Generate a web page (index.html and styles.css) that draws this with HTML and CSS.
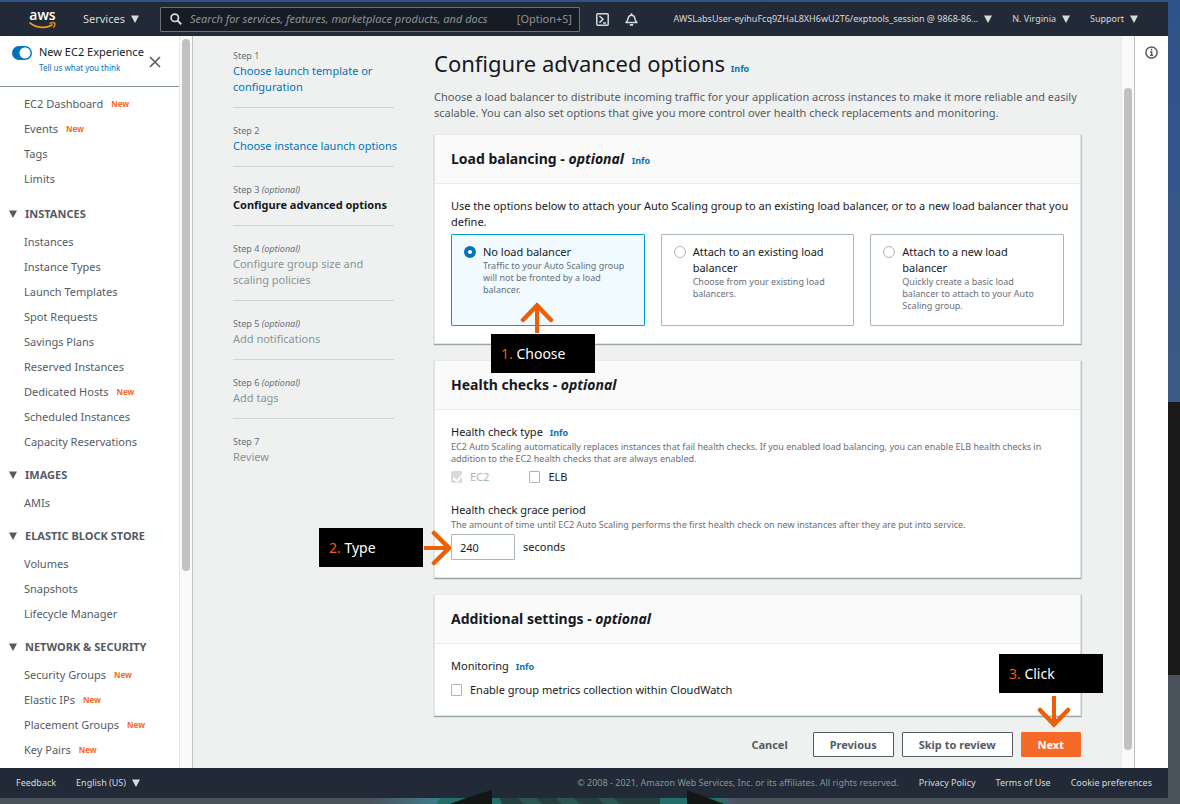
FILE: index.html
```html
<!DOCTYPE html>
<html lang="en">
<head>
<meta charset="utf-8">
<title>Configure advanced options</title>
<link rel="stylesheet" href="styles.css">
</head>
<body>
<svg class="defs" width="0" height="0" aria-hidden="true">
  <symbol id="caret" viewBox="0 0 8 8"><path d="M0 0.5H8L4 8Z" fill="currentColor"/></symbol>
</svg>
<div class="window">
  <header class="topbar">
    <a class="logo" href="#" aria-label="Home">
      <span>aws</span>
      <svg viewBox="0 0 27 7" aria-hidden="true"><path d="M1 1C8 6.5 17 6.5 23 3" fill="none" stroke="#f7981f" stroke-width="1.6" stroke-linecap="round"/><path d="M20.500 1.300C23 .6 25 .6 25.800 1.200C26.200 2.400 25.500 4.300 24.300 5.600" fill="none" stroke="#f7981f" stroke-width="1.300"/></svg>
    </a>
    <button class="services">Services <svg class="caret"><use href="#caret"/></svg></button>
    <label class="search">
      <svg viewBox="0 0 12 12" aria-hidden="true"><circle cx="4.800" cy="4.800" r="3.700" fill="none" stroke="currentColor" stroke-width="1.700"/><path d="M7.600 7.600L11.200 11.200" stroke="currentColor" stroke-width="2"/></svg>
      <input type="text" aria-label="Search" placeholder="Search for services, features, marketplace products, and docs">
      <span>[Option+S]</span>
    </label>
    <button class="icon-btn" aria-label="CloudShell"><svg width="13" height="13" viewBox="0 0 13 13"><rect x=".8" y=".8" width="11.400" height="11.400" rx="1" fill="none" stroke="currentColor" stroke-width="1.500"/><path d="M3.500 3L7 6.300L3.500 9.600M7 10H10" fill="none" stroke="currentColor" stroke-width="1.500"/></svg></button>
    <button class="icon-btn bell" aria-label="Notifications"><svg width="13" height="13" viewBox="0 0 13 13"><path d="M1 9.500C3 7.800 2.800 6.500 3.300 4.800C3.800 3 5 2.300 6.500 2.300S9.200 3 9.700 4.800C10.200 6.500 10 7.800 12 9.500Z" fill="none" stroke="currentColor" stroke-width="1.500" stroke-linejoin="round"/><path d="M6.500 .2V2.500M4.800 11.800H8.200" stroke="currentColor" stroke-width="1.700"/></svg></button>
    <nav class="account">
      <button>AWSLabsUser-eyihuFcq9ZHaL8XH6wU2T6/exptools_session @ 9868-86... <svg class="caret"><use href="#caret"/></svg></button>
      <button>N. Virginia <svg class="caret"><use href="#caret"/></svg></button>
      <button>Support <svg class="caret"><use href="#caret"/></svg></button>
    </nav>
  </header>

  <div class="workspace">
    <aside class="sidebar">
      <div class="experience">
        <input class="toggle" type="checkbox" id="new-exp" checked>
        <div class="experience-text">
          <label for="new-exp">New EC2 Experience</label>
          <a href="#">Tell us what you think</a>
        </div>
        <button class="close" aria-label="Close"><svg width="12" height="12" viewBox="0 0 12 12"><path d="M1 1L11 11M11 1L1 11" stroke="currentColor" stroke-width="1.600"/></svg></button>
      </div>
      <nav class="menu">
        <ul>
          <li><a href="#">EC2 Dashboard</a><em>New</em></li>
          <li><a href="#">Events</a><em>New</em></li>
          <li><a href="#">Tags</a></li>
          <li><a href="#">Limits</a></li>
        </ul>
        <button class="group"><svg class="caret"><use href="#caret"/></svg>INSTANCES</button>
        <ul>
          <li><a href="#">Instances</a></li>
          <li><a href="#">Instance Types</a></li>
          <li><a href="#">Launch Templates</a></li>
          <li><a href="#">Spot Requests</a></li>
          <li><a href="#">Savings Plans</a></li>
          <li><a href="#">Reserved Instances</a></li>
          <li><a href="#">Dedicated Hosts</a><em>New</em></li>
          <li><a href="#">Scheduled Instances</a></li>
          <li><a href="#">Capacity Reservations</a></li>
        </ul>
        <button class="group"><svg class="caret"><use href="#caret"/></svg>IMAGES</button>
        <ul>
          <li><a href="#">AMIs</a></li>
        </ul>
        <button class="group"><svg class="caret"><use href="#caret"/></svg>ELASTIC BLOCK STORE</button>
        <ul>
          <li><a href="#">Volumes</a></li>
          <li><a href="#">Snapshots</a></li>
          <li><a href="#">Lifecycle Manager</a></li>
        </ul>
        <button class="group"><svg class="caret"><use href="#caret"/></svg>NETWORK &amp; SECURITY</button>
        <ul>
          <li><a href="#">Security Groups</a><em>New</em></li>
          <li><a href="#">Elastic IPs</a><em>New</em></li>
          <li><a href="#">Placement Groups</a><em>New</em></li>
          <li><a href="#">Key Pairs</a><em>New</em></li>
        </ul>
      </nav>
    </aside>
    <div class="track track-left"><div class="thumb"></div></div>

    <div class="content">
      <ol class="steps">
        <li><small>Step 1</small><a href="#">Choose launch template or configuration</a></li>
        <li><small>Step 2</small><a href="#">Choose instance launch options</a></li>
        <li class="current"><small>Step 3 <i>(optional)</i></small><span>Configure advanced options</span></li>
        <li><small>Step 4 <i>(optional)</i></small><span>Configure group size and scaling policies</span></li>
        <li><small>Step 5 <i>(optional)</i></small><span>Add notifications</span></li>
        <li><small>Step 6 <i>(optional)</i></small><span>Add tags</span></li>
        <li><small>Step 7</small><span>Review</span></li>
      </ol>

      <main class="main">
        <h1>Configure advanced options <a class="info" href="#">Info</a></h1>
        <p class="intro">Choose a load balancer to distribute incoming traffic for your application across instances to make it more reliable and easily scalable. You can also set options that give you more control over health check replacements and monitoring.</p>

        <section class="panel">
          <h2>Load balancing - <i>optional</i> <a class="info" href="#">Info</a></h2>
          <div class="panel-body">
            <p class="lead">Use the options below to attach your Auto Scaling group to an existing load balancer, or to a new load balancer that you define.</p>
            <div class="tiles">
              <div class="tile selected">
                <input type="radio" name="lb" id="lb-none" checked>
                <div><label for="lb-none">No load balancer</label><p>Traffic to your Auto Scaling group will not be fronted by a load balancer.</p></div>
                <div class="note note-choose">
                  <svg width="34" height="32" viewBox="0 0 34 32" aria-hidden="true"><path d="M17 31V4" stroke="#eb5f07" stroke-width="4"/><path d="M3 18L17 3.500L31 18" fill="none" stroke="#eb5f07" stroke-width="4.500" stroke-linecap="round"/></svg>
                  <div class="callout"><b>1.</b> Choose</div>
                </div>
              </div>
              <div class="tile">
                <input type="radio" name="lb" id="lb-existing">
                <div><label for="lb-existing">Attach to an existing load balancer</label><p>Choose from your existing load balancers.</p></div>
              </div>
              <div class="tile">
                <input type="radio" name="lb" id="lb-new">
                <div><label for="lb-new">Attach to a new load balancer</label><p>Quickly create a basic load balancer to attach to your Auto Scaling group.</p></div>
              </div>
            </div>
          </div>
        </section>

        <section class="panel">
          <h2>Health checks - <i>optional</i></h2>
          <div class="panel-body">
            <h3>Health check type <a class="info" href="#">Info</a></h3>
            <p class="help">EC2 Auto Scaling automatically replaces instances that fail health checks. If you enabled load balancing, you can enable ELB health checks in addition to the EC2 health checks that are always enabled.</p>
            <div class="checks">
              <span class="check disabled"><input type="checkbox" id="hc-ec2" checked disabled><label for="hc-ec2">EC2</label></span>
              <span class="check"><input type="checkbox" id="hc-elb"><label for="hc-elb">ELB</label></span>
            </div>
            <label class="field-label" for="grace">Health check grace period</label>
            <p class="help">The amount of time until EC2 Auto Scaling performs the first health check on new instances after they are put into service.</p>
            <div class="grace">
              <input type="text" id="grace" value="240"><span>seconds</span>
              <div class="note note-type">
                <div class="callout"><b>2.</b> Type</div>
                <svg width="28" height="36" viewBox="0 0 28 36" aria-hidden="true"><path d="M1 18H25" stroke="#eb5f07" stroke-width="4"/><path d="M11 3L26 18L11 33" fill="none" stroke="#eb5f07" stroke-width="4.500" stroke-linecap="round"/></svg>
              </div>
            </div>
          </div>
        </section>

        <section class="panel">
          <h2>Additional settings - <i>optional</i></h2>
          <div class="panel-body extra-body">
            <h3>Monitoring <a class="info" href="#">Info</a></h3>
            <span class="check"><input type="checkbox" id="metrics"><label for="metrics">Enable group metrics collection within CloudWatch</label></span>
          </div>
        </section>

        <div class="actions">
          <button class="btn link">Cancel</button>
          <button class="btn">Previous</button>
          <button class="btn">Skip to review</button>
          <button class="btn primary">Next</button>
          <div class="note note-click">
            <div class="callout"><b>3.</b> Click</div>
            <svg width="34" height="32" viewBox="0 0 34 32" aria-hidden="true"><path d="M17 0V28" stroke="#eb5f07" stroke-width="4"/><path d="M3 14L17 28.500L31 14" fill="none" stroke="#eb5f07" stroke-width="4.500" stroke-linecap="round"/></svg>
          </div>
        </div>
      </main>
    </div>
    <div class="track track-right"><div class="thumb"></div></div>
    <aside class="help-rail">
      <button aria-label="Help panel"><svg width="13" height="13" viewBox="0 0 13 13"><circle cx="6.500" cy="6.500" r="5.600" fill="none" stroke="currentColor" stroke-width="1.500"/><path d="M6.500 2.800V4.500M5 5.900H6.700V9.300M4.900 9.400H8.200" fill="none" stroke="currentColor" stroke-width="1.400"/></svg></button>
    </aside>
  </div>

  <footer class="footer">
    <button>Feedback</button>
    <button class="lang">English (US) <svg class="caret"><use href="#caret"/></svg></button>
    <span class="copyright">© 2008 - 2021, Amazon Web Services, Inc. or its affiliates. All rights reserved.</span>
    <a href="#">Privacy Policy</a>
    <a href="#">Terms of Use</a>
    <a href="#">Cookie preferences</a>
  </footer>
</div>
<svg class="wallpaper" width="370" height="14" viewBox="0 0 370 14" aria-hidden="true">
  <defs><linearGradient id="haze"><stop offset="0" stop-color="#4a525c"/><stop offset=".2" stop-color="#3f7f90"/><stop offset=".9" stop-color="#4b6f88"/><stop offset="1" stop-color="#4a525c"/></linearGradient></defs>
  <rect y="8" width="370" height="6" fill="url(#haze)"/>
  <path d="M66 14L70 8H350L358 14Z" fill="#246e6a"/>
  <path d="M130 8H290V14H132Z" fill="#253f3e"/>
  <path d="M148 8H166L172 14H154ZM186 8H204L210 14H192ZM228 8H244L250 14H234Z" fill="#2b5552"/>
  <path d="M80 14Q98 7 122 0V14ZM317 0L354 14H317Z" fill="#141615"/>
</svg>
</body>
</html>
```
FILE: styles.css
```css
* { box-sizing: border-box; }

body {
  margin: 0;
  height: 100vh;
  display: flex;
  flex-direction: column;
  padding: 2px 12px 6px 0;
  overflow: hidden;
  position: relative;
  background: linear-gradient(#2f5288, #3b5a86 50%, #191919 50%, #191919 84%, #4a525c 84%);
  font: 11px/16px "Noto Sans", "Open Sans", sans-serif;
  color: #16191f;
}

.defs { position: absolute; }
button, input { font: inherit; color: inherit; }
button { border: 0; background: none; padding: 0; cursor: pointer; }
a { color: #0073bb; text-decoration: none; }
p, h1, h2, h3, ul, ol { margin: 0; padding: 0; }
ul, ol { list-style: none; }
.caret { width: 8px; height: 8px; }

.window { flex: 1; min-height: 0; display: flex; flex-direction: column; }

/* top bar */
.topbar {
  flex: none;
  height: 34px;
  display: flex;
  align-items: center;
  background: #212a36;
  color: #d5dbdb;
  padding: 0 30px 0 29px;
}
.logo { display: flex; flex-direction: column; align-items: center; color: #fff; width: 27px; }
.logo span { font: 600 14px/12px "Open Sans", sans-serif; }
.logo svg { width: 27px; height: 7px; margin-top: 1px; }
.services { margin-left: 27px; display: flex; align-items: center; gap: 6px; }
.search {
  flex: 0 1 420px;
  min-width: 0;
  height: 25px;
  margin-left: 21px;
  display: flex;
  align-items: center;
  gap: 8px;
  padding: 0 7px 0 9px;
  border: 1px solid #687078;
  border-radius: 1px;
  background: #171c24;
  color: #879596;
}
.search svg { flex: none; width: 12px; height: 12px; color: #d5dbdb; }
.search input { flex: 1; min-width: 0; border: 0; padding: 0; outline: 0; background: none; }
.search input::placeholder { color: #879596; font-style: italic; opacity: 1; }
.icon-btn { display: flex; margin-left: 16px; }
.account { flex: 1; display: flex; justify-content: flex-end; gap: 20px; font-size: 9px; white-space: nowrap; }
.account button { display: flex; align-items: center; gap: 6px; }

/* workspace */
.workspace { flex: 1; min-height: 0; display: flex; overflow: hidden; background: #eff1f1; }

.sidebar { flex: 0 0 179px; background: #fff; overflow: hidden; color: #545b64; }
.experience {
  display: flex;
  align-items: flex-start;
  height: 51px;
  padding: 8px 12px 0;
  border-bottom: 1px solid #879596;
}
.toggle {
  appearance: none;
  flex: none;
  width: 20px;
  height: 14px;
  margin: 2px 7px 0 0;
  border-radius: 7px;
  background: radial-gradient(circle at 13px 7px, #fff 5px, #0073bb 6px);
}
.experience-text { flex: 1; white-space: nowrap; }
.experience-text label { display: block; color: #16191f; }
.experience-text a { display: block; font-size: 8px; }
.close { display: flex; margin: 12px 6px 0 0; }

.menu { padding-top: 4px; }
.menu ul:first-child { margin-bottom: 8px; }
.menu ul:first-child + .group { margin-top: 0; }
.menu li { height: 25px; display: flex; align-items: center; gap: 8px; padding-left: 24px; white-space: nowrap; }
.menu li a { color: #545b64; }
.menu em { font-size: 8px; font-style: normal; font-weight: bold; color: #f66a28; }
.group {
  width: 100%;
  height: 30px;
  margin-top: 6px;
  padding-left: 9px;
  display: flex;
  align-items: center;
  gap: 8px;
  font-weight: bold;
  white-space: nowrap;
}

.track { flex: 0 0 14px; display: flex; flex-direction: column; background: #fafafa; border-left: 1px solid #e8e8e8; }
.track-left { border-right: 1px solid #c0c4c4; padding: 3px 2px 0; }
.track-left .thumb { height: 73%; }
.track-right { border-right: 1px solid #b8c2c2; padding: 52px 2px 18px; }
.track-right .thumb { flex: 1; }
.thumb { width: 8px; border-radius: 4px; background: #c1c1c1; }

.content { flex: 1; min-width: 0; display: flex; gap: 40px; padding: 0 40px; }

.steps { flex: 0 0 161px; }
.steps li { padding: 15px 0 12px; border-bottom: 1px solid #d0d5d5; }
.steps li:first-child { padding-top: 12px; }
.steps li:last-child { border: 0; }
.steps small { display: block; font-size: 9px; line-height: 15px; color: #687078; }
.steps span { display: block; color: #879596; }
.steps a { display: block; margin-right: -8px; }
.steps .current span { color: #16191f; font-weight: bold; }

.main { flex: 1; min-width: 0; }
h1 { padding: 12px 0 11px; font-size: 22px; line-height: 30px; font-weight: 400; }
.info { margin-left: 4px; font-size: 9px; line-height: 1; font-weight: bold; }
h1 .info { margin-left: 0; }
.intro { color: #545b64; margin-bottom: 13px; }

.panel {
  margin-bottom: 16px;
  background: #fff;
  border: 1px solid #dfe4e4;
  border-top-color: #e6eaea;
  box-shadow: 0 1px 1px #9aa5a8, 1px 1px 1px #c5cccc;
}
h2 {
  padding: 14px 16px;
  font-size: 14px;
  line-height: 20px;
  background: #fafafa;
  border-bottom: 1px solid #eaeded;
}
h3, .field-label { display: block; margin: 0 0 1px; font-size: 11px; line-height: 16px; font-weight: 400; }
.panel-body { padding: 14px 16px 17px; }
.lead { margin-right: -15px; }
.tiles { display: grid; grid-template-columns: repeat(3, 1fr); gap: 16px; margin-top: 4px; }
.tile {
  position: relative;
  display: flex;
  align-items: flex-start;
  gap: 7px;
  min-height: 92px;
  padding: 9px 12px 11px;
  border: 1px solid #aab7b8;
  border-radius: 1px;
}
.tile.selected { border-color: #00a1c9; background: #f1faff; }
.tile label { display: block; }
.tile p, .help { font-size: 9px; line-height: 12px; color: #687078; }
.tile input {
  appearance: none;
  flex: none;
  width: 12px;
  height: 12px;
  margin: 2px 0 0;
  border: 1px solid #aab7b8;
  border-radius: 50%;
  background: #fff;
}
.tile input:checked { border: 4px solid #0073bb; }

.checks { display: flex; gap: 40px; margin: 4px 0 17px; }
.check { display: flex; align-items: center; gap: 8px; }
.check input {
  appearance: none;
  width: 11px;
  height: 12px;
  margin: 0;
  border: 1px solid #aab7b8;
  border-radius: 1px;
  background: #fff;
}
.check input:disabled {
  position: relative;
  border-color: #d5dbdb;
  background: #d5dbdb;
}
.check input:disabled::after {
  content: "";
  position: absolute;
  left: 3px;
  top: 0;
  width: 4px;
  height: 8px;
  border: solid #fff;
  border-width: 0 2px 2px 0;
  transform: rotate(40deg);
}
.disabled label { color: #aab7b8; }
.grace { position: relative; display: flex; align-items: center; gap: 8px; margin-top: 3px; }
.grace input { width: 64px; height: 26px; padding: 0 8px; border: 1px solid #aab7b8; border-radius: 1px; }
.extra-body { padding-bottom: 17px; }
.extra-body .check { margin-top: 8px; }

.actions { position: relative; display: flex; justify-content: flex-end; gap: 8px; }
.btn {
  height: 25px;
  padding: 0 16px;
  border: 1px solid #545b64;
  border-radius: 1px;
  background: #fff;
  color: #545b64;
  font-weight: bold;
}
.btn.link { border-color: transparent; background: none; }
.btn.primary { background: #f66a28; border-color: #f66a28; color: #fff; }

/* walkthrough notes laid over the form */
.note { position: absolute; display: flex; z-index: 2; }
.note svg { flex: none; display: block; }
.callout {
  width: 104px;
  height: 39px;
  padding-left: 10px;
  background: #000;
  color: #fff;
  font-size: 14px;
  line-height: 39px;
  white-space: nowrap;
}
.callout b { font-weight: 400; color: #eb5f07; }
.note-choose { left: 39px; top: 67px; flex-direction: column; }
.note-choose svg { margin-left: 29px; }
.note-type { right: 100%; top: -6px; align-items: center; }
.note-click { right: -22px; bottom: 29px; flex-direction: column; }
.note-click svg { margin: 3px 0 0 38px; }

.help-rail { flex: 0 0 33px; padding-top: 10px; background: #fff; color: #545b64; }
.help-rail button { display: flex; margin: 0 auto; }

.footer {
  flex: none;
  height: 30px;
  display: flex;
  align-items: center;
  gap: 20px;
  padding: 0 16px;
  background: #212a36;
  color: #d5dbdb;
  font-size: 9px;
  white-space: nowrap;
}
.footer a { color: #d5dbdb; }
.lang { display: flex; align-items: center; gap: 6px; }
.copyright { margin-left: auto; color: #879596; }

.wallpaper { position: absolute; left: 370px; bottom: 0; }
```
